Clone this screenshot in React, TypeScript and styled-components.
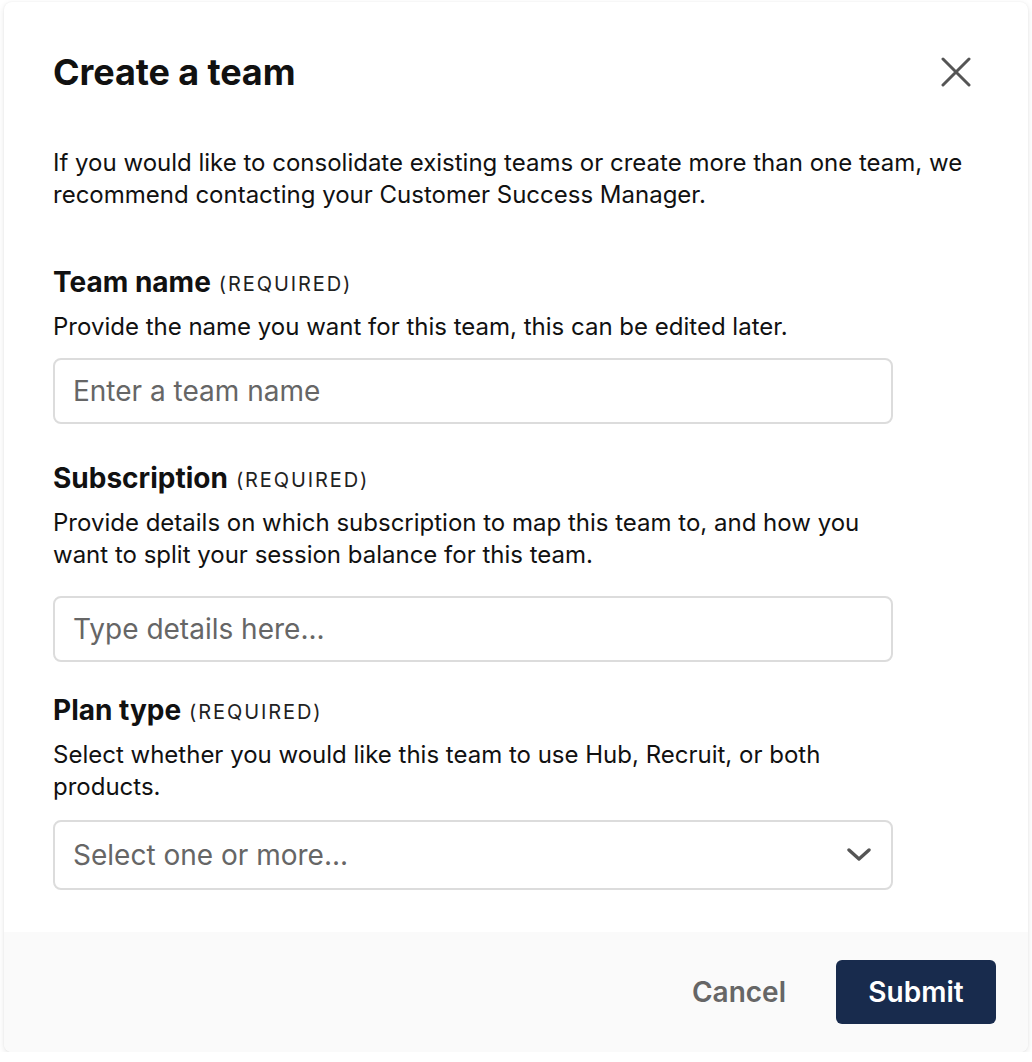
import React from 'react';
import styled, {createGlobalStyle} from 'styled-components';

const TEXT = '#111111';
const MUTED = '#666666';
const BORDER = '#dcdcdc';
const NAVY = '#182b4d';

const GlobalStyle = createGlobalStyle`
  html, body {
    margin: 0;
    padding: 0;
    background: #ffffff;
    font-family: Inter, "Noto Sans", "Liberation Sans", sans-serif;
    color: ${TEXT};
  }
  * { box-sizing: border-box; }
`;

const Dialog = styled.div`
  margin: 2px 4px 0 4px;
  width: 1024px;
  height: 1050px;
  background: #ffffff;
  border-radius: 8px;
  box-shadow: 0 2px 6px rgba(0, 0, 0, 0.1), 0 0 2px rgba(0, 0, 0, 0.06);
  display: flex;
  flex-direction: column;
  overflow: hidden;
`;

const Body = styled.div`
  flex: 1;
  padding: 50px 57px 0 49px;
  display: flex;
  flex-direction: column;
`;

const Header = styled.div`
  display: flex;
  align-items: center;
  justify-content: space-between;
`;

const Title = styled.h1`
  margin: 0;
  font-size: 36px;
  line-height: 40px;
  font-weight: 700;
  letter-spacing: -0.1px;
`;

const CloseButton = styled.button`
  width: 30px;
  height: 30px;
  padding: 0;
  border: none;
  background: none;
  display: flex;
  align-items: center;
  justify-content: center;
  cursor: pointer;
`;

const Intro = styled.p`
  margin: 55px 0 0 0;
  font-size: 24px;
  line-height: 32px;
  max-width: 920px;
`;

const Field = styled.div<{top: number}>`
  margin-top: ${({top}) => top}px;
  display: flex;
  flex-direction: column;
  max-width: 840px;
`;

const LabelRow = styled.div`
  display: flex;
  align-items: baseline;
  gap: 8px;
  line-height: 32px;
`;

const Label = styled.label`
  font-size: 28px;
  font-weight: 700;
`;

const Required = styled.span`
  position: relative;
  top: -1px;
  font-size: 20px;
  letter-spacing: 1.9px;
  color: #222222;
`;

const Help = styled.div`
  margin-top: 10px;
  font-size: 24px;
  line-height: 32px;
`;

const Input = styled.input<{gap: number}>`
  margin-top: ${({gap}) => gap}px;
  height: 66px;
  width: 100%;
  border: 2px solid ${BORDER};
  border-radius: 8px;
  padding: 0 18px;
  font-family: inherit;
  font-size: 28px;
  color: ${TEXT};
  outline: none;
  &::placeholder {
    color: ${MUTED};
  }
`;

const Select = styled.div`
  margin-top: 17px;
  height: 70px;
  width: 100%;
  border: 2px solid ${BORDER};
  border-radius: 8px;
  padding: 0 20px 0 18px;
  display: flex;
  align-items: center;
  justify-content: space-between;
  font-size: 28px;
  color: ${MUTED};
  cursor: pointer;
`;

const Footer = styled.div`
  height: 120px;
  background: #fafafa;
  display: flex;
  align-items: center;
  justify-content: flex-end;
  gap: 50px;
  padding: 0 32px 0 0;
`;

const CancelButton = styled.button`
  border: none;
  background: none;
  padding: 0;
  font-family: inherit;
  font-size: 28px;
  font-weight: 600;
  color: ${MUTED};
  cursor: pointer;
`;

const SubmitButton = styled.button`
  width: 160px;
  height: 64px;
  border: none;
  border-radius: 6px;
  background: ${NAVY};
  color: #ffffff;
  font-family: inherit;
  font-size: 28px;
  font-weight: 600;
  cursor: pointer;
`;

const CloseIcon = () => (
  <svg width="30" height="30" viewBox="0 0 30 30" fill="none">
    <path d="M2 2 L28 28 M28 2 L2 28" stroke="#555555" strokeWidth="3" strokeLinecap="round" />
  </svg>
);

const ChevronIcon = () => (
  <svg width="24" height="14" viewBox="0 0 24 14" fill="none">
    <path d="M2 2 L12 11 L22 2" stroke="#555555" strokeWidth="3.4" strokeLinecap="round" strokeLinejoin="round" />
  </svg>
);

const App = () => (
  <>
    <GlobalStyle />
    <Dialog role="dialog">
      <Body>
        <Header>
          <Title>Create a team</Title>
          <CloseButton aria-label="Close">
            <CloseIcon />
          </CloseButton>
        </Header>
        <Intro>
          If you would like to consolidate existing teams or create more than one team, we
          recommend contacting your Customer Success Manager.
        </Intro>

        <Field top={55}>
          <LabelRow>
            <Label>Team name</Label>
            <Required>(REQUIRED)</Required>
          </LabelRow>
          <Help>Provide the name you want for this team, this can be edited later.</Help>
          <Input gap={15} placeholder="Enter a team name" />
        </Field>

        <Field top={38}>
          <LabelRow>
            <Label>Subscription</Label>
            <Required>(REQUIRED)</Required>
          </LabelRow>
          <Help>
            Provide details on which subscription to map this team to, and how you
            <br />
            want to split your session balance for this team.
          </Help>
          <Input gap={25} placeholder="Type details here..." />
        </Field>

        <Field top={32}>
          <LabelRow>
            <Label>Plan type</Label>
            <Required>(REQUIRED)</Required>
          </LabelRow>
          <Help>
            Select whether you would like this team to use Hub, Recruit, or both
            <br />
            products.
          </Help>
          <Select>
            <span>Select one or more...</span>
            <ChevronIcon />
          </Select>
        </Field>
      </Body>
      <Footer>
        <CancelButton>Cancel</CancelButton>
        <SubmitButton>Submit</SubmitButton>
      </Footer>
    </Dialog>
  </>
);

export default App;
